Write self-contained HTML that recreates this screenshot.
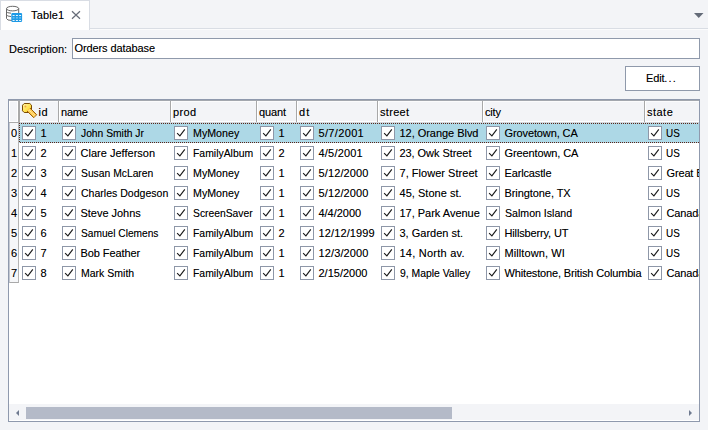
<!DOCTYPE html><html><head><meta charset="utf-8"><style>
*{box-sizing:border-box;margin:0;padding:0}
html,body{width:708px;height:430px;overflow:hidden;background:#f3f4f7;font-family:"Liberation Sans",sans-serif;font-size:11px;color:#000;letter-spacing:-0.15px}
.a{position:absolute}
.t{position:absolute;white-space:nowrap;line-height:13px;text-shadow:0 0 0.4px rgba(0,0,0,0.35)}
.cb{position:absolute;width:14px;height:14px;border:1px solid #8e97a8;background:#fff}
.cb svg{position:absolute;left:0;top:0}
.hs{position:absolute;top:101px;width:1px;height:21px;background:#a8a8a8}
.hw{position:absolute;top:101px;width:1px;height:21px;background:#fff}
</style></head><body>
<div class="a" style="left:0;top:28px;width:708px;height:1px;background:#d9dde4"></div>
<div class="a" style="left:0;top:29px;width:708px;height:1px;background:#fbfbfc"></div>
<div class="a" style="left:0;top:0;width:90px;height:30px;background:#fff;border:1px solid #d9dde4;border-bottom:none"></div>
<svg class="a" style="left:0;top:0" width="24" height="24" viewBox="0 0 24 24">
 <path d="M6.5 8.5 V18.5 Q6.5 20.5 12.5 20.5 Q14 20.5 15 20.3" fill="none" stroke="#686868" stroke-width="1"/>
 <ellipse cx="12.6" cy="8.6" rx="6.1" ry="2.3" fill="#fff" stroke="#686868" stroke-width="1"/>
 <path d="M18.7 8.6 V13" fill="none" stroke="#686868" stroke-width="1"/>
 <path d="M6.5 11.5 Q6.5 13 11 13.2 M6.5 14.8 Q6.5 16.3 11 16.5" fill="none" stroke="#686868" stroke-width="1"/>
 <rect x="11.3" y="12.9" width="10.8" height="9.1" rx="1.2" fill="#1d9ae6"/>
 <g fill="#e8f5fd"><rect x="12.6" y="15" width="2" height="1"/><rect x="15.9" y="15" width="2" height="1"/><rect x="19.1" y="15" width="2" height="1"/>
 <rect x="12.6" y="17.4" width="2" height="1" opacity=".6"/><rect x="15.9" y="17.4" width="2" height="1" opacity=".6"/><rect x="19.1" y="17.4" width="2" height="1" opacity=".6"/>
 <rect x="12.6" y="20" width="2" height="1"/><rect x="15.9" y="20" width="2" height="1"/><rect x="19.1" y="20" width="2" height="1"/></g>
</svg>
<div class="t" style="left:31px;top:9px;letter-spacing:0.14px">Table1</div>
<svg class="a" style="left:70px;top:9px" width="12" height="12" viewBox="0 0 12 12"><path d="M2 2.3L10 9.7M10 2.3L2 9.7" stroke="#666c78" stroke-width="1.2"/></svg>
<svg class="a" style="left:693px;top:12px" width="12" height="8" viewBox="0 0 12 8"><path d="M1 1 H10.5 L5.75 6 Z" fill="#646b78"/></svg>
<div class="t" style="left:9px;top:43px;letter-spacing:0">Description:</div>
<div class="a" style="left:72px;top:38px;width:628px;height:21px;background:#fff;border:1px solid #8f99ab"></div>
<div class="t" style="left:74.5px;top:42px;letter-spacing:-0.1px">Orders database</div>
<div class="a" style="left:625px;top:66px;width:75px;height:25px;background:#fff;border:1px solid #8f99ab"></div>
<div class="t" style="left:646px;top:72px">Edit<span style="letter-spacing:1.1px">...</span></div>
<div class="a" style="left:8px;top:99px;width:692px;height:323px;background:#fff;border:1px solid #8f99ad"></div>
<div class="a" style="left:9px;top:100px;width:690px;height:1px;background:#a3a7ae"></div>
<div class="a" style="left:10px;top:101px;width:689px;height:21px;background:#f3f4f7;border-top:1px solid #fbfbfc;border-bottom:1px solid #fdfdfe"></div>
<div class="a" style="left:19px;top:122px;width:680px;height:1px;background:#d4d6da"></div>
<div class="a" style="left:0;top:0;width:699px;height:404px;overflow:hidden">
<div class="a" style="left:17px;top:101px;width:1px;height:21px;background:#fff"></div>
<div class="a" style="left:18px;top:101px;width:2px;height:22px;background:#a9a9a9"></div>
<div class="a" style="left:9px;top:122px;width:10px;height:1px;background:#a9a9a9"></div>
<div class="hs" style="left:58px"></div><div class="hw" style="left:59px"></div>
<div class="t" style="left:61px;top:106px;letter-spacing:-0.2px;">name</div>
<div class="hs" style="left:170px"></div><div class="hw" style="left:171px"></div>
<div class="t" style="left:173px;top:106px;letter-spacing:0.4px;">prod</div>
<div class="hs" style="left:256px"></div><div class="hw" style="left:257px"></div>
<div class="t" style="left:259px;top:106px;letter-spacing:-0.1px;">quant</div>
<div class="hs" style="left:296px"></div><div class="hw" style="left:297px"></div>
<div class="t" style="left:299px;top:106px;letter-spacing:1.1px;">dt</div>
<div class="hs" style="left:377px"></div><div class="hw" style="left:378px"></div>
<div class="t" style="left:380px;top:106px;letter-spacing:0.32px;">street</div>
<div class="hs" style="left:482px"></div><div class="hw" style="left:483px"></div>
<div class="t" style="left:485px;top:106px;letter-spacing:-0.2px;">city</div>
<div class="hs" style="left:644px"></div><div class="hw" style="left:645px"></div>
<div class="t" style="left:647px;top:106px;letter-spacing:0.475px;">state</div>
<div class="hs" style="left:644px"></div>
<div class="t" style="left:38.5px;top:106px;letter-spacing:0.5px">id</div>
<svg class="a" style="left:19px;top:100px" width="20" height="20" viewBox="0 0 20 20">
 <defs><linearGradient id="kg" x1="0" y1="0" x2="1" y2="1"><stop offset="0" stop-color="#fff6a8"/><stop offset="0.6" stop-color="#ffe04a"/><stop offset="1" stop-color="#f2b820"/></linearGradient></defs>
 <path d="M5.2 3.5 H10.8 L12.5 5.2 V10.8 L10.8 12.5 H5.2 L3.5 10.8 V5.2 Z" fill="url(#kg)" stroke="#7a4a02" stroke-width="1"/>
 <path d="M10.98 8.02 L17.68 14.72 L14.72 17.68 L8.02 10.98 Z" fill="#ffc23e"/>
 <path d="M8.02 10.98 L14.72 17.68 L17.68 14.72 L10.98 8.02" fill="none" stroke="#9a5c04" stroke-width="1"/>
 <path d="M10 10 L16.2 16.2" stroke="#fff0b0" stroke-width="2.4" stroke-dasharray="0.8 0.9"/>
 <circle cx="6.4" cy="6.4" r="1" fill="#f2a448"/>
</svg>
<div class="a" style="left:9px;top:123px;width:10px;height:160px;background:#f6f7f9;border-left:1px solid #c3c8d2;border-right:1px solid #b4b4b4;border-bottom:1px solid #a9a9a9"></div>
<div class="a" style="left:19px;top:123px;width:680px;height:20px;background:#add8e6"></div>
<div class="a" style="left:19px;top:123px;width:680px;height:1px;background:repeating-linear-gradient(90deg,#5e2417 0 1px,transparent 1px 2px)"></div>
<div class="a" style="left:20px;top:142px;width:679px;height:1px;background:repeating-linear-gradient(90deg,#5e2417 0 1px,transparent 1px 2px)"></div>
<div class="a" style="left:19px;top:123px;width:1px;height:20px;background:repeating-linear-gradient(180deg,#5e2417 0 1px,transparent 1px 2px)"></div>
<div class="t" style="left:11px;top:127px">0</div>
<div class="cb" style="left:22px;top:126px"><svg width="12" height="12" viewBox="0 0 12 12"><path d="M2.1 6.2 L4.9 8.9 L9.8 2.3" fill="none" stroke="#1a1a1a" stroke-width="1.1"/></svg></div>
<div class="t" style="left:40.5px;top:127px;">1</div>
<div class="cb" style="left:62px;top:126px"><svg width="12" height="12" viewBox="0 0 12 12"><path d="M2.1 6.2 L4.9 8.9 L9.8 2.3" fill="none" stroke="#1a1a1a" stroke-width="1.1"/></svg></div>
<div class="t" style="left:80.5px;top:127px;letter-spacing:0;transform:scaleX(0.9358);transform-origin:0 0;">John Smith Jr</div>
<div class="cb" style="left:174px;top:126px"><svg width="12" height="12" viewBox="0 0 12 12"><path d="M2.1 6.2 L4.9 8.9 L9.8 2.3" fill="none" stroke="#1a1a1a" stroke-width="1.1"/></svg></div>
<div class="t" style="left:192.5px;top:127px;letter-spacing:0;transform:scaleX(0.9702);transform-origin:0 0;">MyMoney</div>
<div class="cb" style="left:260px;top:126px"><svg width="12" height="12" viewBox="0 0 12 12"><path d="M2.1 6.2 L4.9 8.9 L9.8 2.3" fill="none" stroke="#1a1a1a" stroke-width="1.1"/></svg></div>
<div class="t" style="left:278.5px;top:127px;">1</div>
<div class="cb" style="left:300px;top:126px"><svg width="12" height="12" viewBox="0 0 12 12"><path d="M2.1 6.2 L4.9 8.9 L9.8 2.3" fill="none" stroke="#1a1a1a" stroke-width="1.1"/></svg></div>
<div class="t" style="left:318.5px;top:127px;letter-spacing:0.343px;">5/7/2001</div>
<div class="cb" style="left:381px;top:126px"><svg width="12" height="12" viewBox="0 0 12 12"><path d="M2.1 6.2 L4.9 8.9 L9.8 2.3" fill="none" stroke="#1a1a1a" stroke-width="1.1"/></svg></div>
<div class="t" style="left:399.5px;top:127px;letter-spacing:-0.036px;">12, Orange Blvd</div>
<div class="cb" style="left:486px;top:126px"><svg width="12" height="12" viewBox="0 0 12 12"><path d="M2.1 6.2 L4.9 8.9 L9.8 2.3" fill="none" stroke="#1a1a1a" stroke-width="1.1"/></svg></div>
<div class="t" style="left:504.5px;top:127px;letter-spacing:-0.108px;">Grovetown, CA</div>
<div class="cb" style="left:648px;top:126px"><svg width="12" height="12" viewBox="0 0 12 12"><path d="M2.1 6.2 L4.9 8.9 L9.8 2.3" fill="none" stroke="#1a1a1a" stroke-width="1.1"/></svg></div>
<div class="t" style="left:665.8px;top:127px;letter-spacing:0;transform:scaleX(0.9);transform-origin:0 0;">US</div>
<div class="t" style="left:11px;top:147px">1</div>
<div class="cb" style="left:22px;top:146px"><svg width="12" height="12" viewBox="0 0 12 12"><path d="M2.1 6.2 L4.9 8.9 L9.8 2.3" fill="none" stroke="#1a1a1a" stroke-width="1.1"/></svg></div>
<div class="t" style="left:40.5px;top:147px;">2</div>
<div class="cb" style="left:62px;top:146px"><svg width="12" height="12" viewBox="0 0 12 12"><path d="M2.1 6.2 L4.9 8.9 L9.8 2.3" fill="none" stroke="#1a1a1a" stroke-width="1.1"/></svg></div>
<div class="t" style="left:80.5px;top:147px;letter-spacing:0.014px;">Clare Jefferson</div>
<div class="cb" style="left:174px;top:146px"><svg width="12" height="12" viewBox="0 0 12 12"><path d="M2.1 6.2 L4.9 8.9 L9.8 2.3" fill="none" stroke="#1a1a1a" stroke-width="1.1"/></svg></div>
<div class="t" style="left:192.5px;top:147px;letter-spacing:0;transform:scaleX(0.9468);transform-origin:0 0;">FamilyAlbum</div>
<div class="cb" style="left:260px;top:146px"><svg width="12" height="12" viewBox="0 0 12 12"><path d="M2.1 6.2 L4.9 8.9 L9.8 2.3" fill="none" stroke="#1a1a1a" stroke-width="1.1"/></svg></div>
<div class="t" style="left:278.5px;top:147px;">2</div>
<div class="cb" style="left:300px;top:146px"><svg width="12" height="12" viewBox="0 0 12 12"><path d="M2.1 6.2 L4.9 8.9 L9.8 2.3" fill="none" stroke="#1a1a1a" stroke-width="1.1"/></svg></div>
<div class="t" style="left:318.5px;top:147px;letter-spacing:0.2px;">4/5/2001</div>
<div class="cb" style="left:381px;top:146px"><svg width="12" height="12" viewBox="0 0 12 12"><path d="M2.1 6.2 L4.9 8.9 L9.8 2.3" fill="none" stroke="#1a1a1a" stroke-width="1.1"/></svg></div>
<div class="t" style="left:399.5px;top:147px;letter-spacing:-0.062px;">23, Owk Street</div>
<div class="cb" style="left:486px;top:146px"><svg width="12" height="12" viewBox="0 0 12 12"><path d="M2.1 6.2 L4.9 8.9 L9.8 2.3" fill="none" stroke="#1a1a1a" stroke-width="1.1"/></svg></div>
<div class="t" style="left:504.5px;top:147px;letter-spacing:-0.108px;">Greentown, CA</div>
<div class="cb" style="left:648px;top:146px"><svg width="12" height="12" viewBox="0 0 12 12"><path d="M2.1 6.2 L4.9 8.9 L9.8 2.3" fill="none" stroke="#1a1a1a" stroke-width="1.1"/></svg></div>
<div class="t" style="left:665.8px;top:147px;letter-spacing:0;transform:scaleX(0.9);transform-origin:0 0;">US</div>
<div class="t" style="left:11px;top:167px">2</div>
<div class="cb" style="left:22px;top:166px"><svg width="12" height="12" viewBox="0 0 12 12"><path d="M2.1 6.2 L4.9 8.9 L9.8 2.3" fill="none" stroke="#1a1a1a" stroke-width="1.1"/></svg></div>
<div class="t" style="left:40.5px;top:167px;">3</div>
<div class="cb" style="left:62px;top:166px"><svg width="12" height="12" viewBox="0 0 12 12"><path d="M2.1 6.2 L4.9 8.9 L9.8 2.3" fill="none" stroke="#1a1a1a" stroke-width="1.1"/></svg></div>
<div class="t" style="left:80.5px;top:167px;letter-spacing:0;transform:scaleX(0.9382);transform-origin:0 0;">Susan McLaren</div>
<div class="cb" style="left:174px;top:166px"><svg width="12" height="12" viewBox="0 0 12 12"><path d="M2.1 6.2 L4.9 8.9 L9.8 2.3" fill="none" stroke="#1a1a1a" stroke-width="1.1"/></svg></div>
<div class="t" style="left:192.5px;top:167px;letter-spacing:0;transform:scaleX(0.9702);transform-origin:0 0;">MyMoney</div>
<div class="cb" style="left:260px;top:166px"><svg width="12" height="12" viewBox="0 0 12 12"><path d="M2.1 6.2 L4.9 8.9 L9.8 2.3" fill="none" stroke="#1a1a1a" stroke-width="1.1"/></svg></div>
<div class="t" style="left:278.5px;top:167px;">1</div>
<div class="cb" style="left:300px;top:166px"><svg width="12" height="12" viewBox="0 0 12 12"><path d="M2.1 6.2 L4.9 8.9 L9.8 2.3" fill="none" stroke="#1a1a1a" stroke-width="1.1"/></svg></div>
<div class="t" style="left:318.5px;top:167px;letter-spacing:0.125px;">5/12/2000</div>
<div class="cb" style="left:381px;top:166px"><svg width="12" height="12" viewBox="0 0 12 12"><path d="M2.1 6.2 L4.9 8.9 L9.8 2.3" fill="none" stroke="#1a1a1a" stroke-width="1.1"/></svg></div>
<div class="t" style="left:399.5px;top:167px;letter-spacing:0.033px;">7, Flower Street</div>
<div class="cb" style="left:486px;top:166px"><svg width="12" height="12" viewBox="0 0 12 12"><path d="M2.1 6.2 L4.9 8.9 L9.8 2.3" fill="none" stroke="#1a1a1a" stroke-width="1.1"/></svg></div>
<div class="t" style="left:504.5px;top:167px;letter-spacing:-0.144px;">Earlcastle</div>
<div class="cb" style="left:648px;top:166px"><svg width="12" height="12" viewBox="0 0 12 12"><path d="M2.1 6.2 L4.9 8.9 L9.8 2.3" fill="none" stroke="#1a1a1a" stroke-width="1.1"/></svg></div>
<div class="t" style="left:666.5px;top:167px;">Great Britain</div>
<div class="t" style="left:11px;top:187px">3</div>
<div class="cb" style="left:22px;top:186px"><svg width="12" height="12" viewBox="0 0 12 12"><path d="M2.1 6.2 L4.9 8.9 L9.8 2.3" fill="none" stroke="#1a1a1a" stroke-width="1.1"/></svg></div>
<div class="t" style="left:40.5px;top:187px;">4</div>
<div class="cb" style="left:62px;top:186px"><svg width="12" height="12" viewBox="0 0 12 12"><path d="M2.1 6.2 L4.9 8.9 L9.8 2.3" fill="none" stroke="#1a1a1a" stroke-width="1.1"/></svg></div>
<div class="t" style="left:80.5px;top:187px;letter-spacing:0;transform:scaleX(0.9578);transform-origin:0 0;">Charles Dodgeson</div>
<div class="cb" style="left:174px;top:186px"><svg width="12" height="12" viewBox="0 0 12 12"><path d="M2.1 6.2 L4.9 8.9 L9.8 2.3" fill="none" stroke="#1a1a1a" stroke-width="1.1"/></svg></div>
<div class="t" style="left:192.5px;top:187px;letter-spacing:0;transform:scaleX(0.9702);transform-origin:0 0;">MyMoney</div>
<div class="cb" style="left:260px;top:186px"><svg width="12" height="12" viewBox="0 0 12 12"><path d="M2.1 6.2 L4.9 8.9 L9.8 2.3" fill="none" stroke="#1a1a1a" stroke-width="1.1"/></svg></div>
<div class="t" style="left:278.5px;top:187px;">1</div>
<div class="cb" style="left:300px;top:186px"><svg width="12" height="12" viewBox="0 0 12 12"><path d="M2.1 6.2 L4.9 8.9 L9.8 2.3" fill="none" stroke="#1a1a1a" stroke-width="1.1"/></svg></div>
<div class="t" style="left:318.5px;top:187px;letter-spacing:0.125px;">5/12/2000</div>
<div class="cb" style="left:381px;top:186px"><svg width="12" height="12" viewBox="0 0 12 12"><path d="M2.1 6.2 L4.9 8.9 L9.8 2.3" fill="none" stroke="#1a1a1a" stroke-width="1.1"/></svg></div>
<div class="t" style="left:399.5px;top:187px;letter-spacing:0.033px;">45, Stone st.</div>
<div class="cb" style="left:486px;top:186px"><svg width="12" height="12" viewBox="0 0 12 12"><path d="M2.1 6.2 L4.9 8.9 L9.8 2.3" fill="none" stroke="#1a1a1a" stroke-width="1.1"/></svg></div>
<div class="t" style="left:504.5px;top:187px;letter-spacing:-0.075px;">Bringtone, TX</div>
<div class="cb" style="left:648px;top:186px"><svg width="12" height="12" viewBox="0 0 12 12"><path d="M2.1 6.2 L4.9 8.9 L9.8 2.3" fill="none" stroke="#1a1a1a" stroke-width="1.1"/></svg></div>
<div class="t" style="left:665.8px;top:187px;letter-spacing:0;transform:scaleX(0.9);transform-origin:0 0;">US</div>
<div class="t" style="left:11px;top:207px">4</div>
<div class="cb" style="left:22px;top:206px"><svg width="12" height="12" viewBox="0 0 12 12"><path d="M2.1 6.2 L4.9 8.9 L9.8 2.3" fill="none" stroke="#1a1a1a" stroke-width="1.1"/></svg></div>
<div class="t" style="left:40.5px;top:207px;">5</div>
<div class="cb" style="left:62px;top:206px"><svg width="12" height="12" viewBox="0 0 12 12"><path d="M2.1 6.2 L4.9 8.9 L9.8 2.3" fill="none" stroke="#1a1a1a" stroke-width="1.1"/></svg></div>
<div class="t" style="left:80.5px;top:207px;letter-spacing:-0.03px;">Steve Johns</div>
<div class="cb" style="left:174px;top:206px"><svg width="12" height="12" viewBox="0 0 12 12"><path d="M2.1 6.2 L4.9 8.9 L9.8 2.3" fill="none" stroke="#1a1a1a" stroke-width="1.1"/></svg></div>
<div class="t" style="left:192.5px;top:207px;letter-spacing:0;transform:scaleX(0.9381);transform-origin:0 0;">ScreenSaver</div>
<div class="cb" style="left:260px;top:206px"><svg width="12" height="12" viewBox="0 0 12 12"><path d="M2.1 6.2 L4.9 8.9 L9.8 2.3" fill="none" stroke="#1a1a1a" stroke-width="1.1"/></svg></div>
<div class="t" style="left:278.5px;top:207px;">1</div>
<div class="cb" style="left:300px;top:206px"><svg width="12" height="12" viewBox="0 0 12 12"><path d="M2.1 6.2 L4.9 8.9 L9.8 2.3" fill="none" stroke="#1a1a1a" stroke-width="1.1"/></svg></div>
<div class="t" style="left:318.5px;top:207px;letter-spacing:-0.029px;">4/4/2000</div>
<div class="cb" style="left:381px;top:206px"><svg width="12" height="12" viewBox="0 0 12 12"><path d="M2.1 6.2 L4.9 8.9 L9.8 2.3" fill="none" stroke="#1a1a1a" stroke-width="1.1"/></svg></div>
<div class="t" style="left:399.5px;top:207px;letter-spacing:-0.014px;">17, Park Avenue</div>
<div class="cb" style="left:486px;top:206px"><svg width="12" height="12" viewBox="0 0 12 12"><path d="M2.1 6.2 L4.9 8.9 L9.8 2.3" fill="none" stroke="#1a1a1a" stroke-width="1.1"/></svg></div>
<div class="t" style="left:504.5px;top:207px;letter-spacing:0;transform:scaleX(0.9632);transform-origin:0 0;">Salmon Island</div>
<div class="cb" style="left:648px;top:206px"><svg width="12" height="12" viewBox="0 0 12 12"><path d="M2.1 6.2 L4.9 8.9 L9.8 2.3" fill="none" stroke="#1a1a1a" stroke-width="1.1"/></svg></div>
<div class="t" style="left:666.5px;top:207px;">Canada</div>
<div class="t" style="left:11px;top:227px">5</div>
<div class="cb" style="left:22px;top:226px"><svg width="12" height="12" viewBox="0 0 12 12"><path d="M2.1 6.2 L4.9 8.9 L9.8 2.3" fill="none" stroke="#1a1a1a" stroke-width="1.1"/></svg></div>
<div class="t" style="left:40.5px;top:227px;">6</div>
<div class="cb" style="left:62px;top:226px"><svg width="12" height="12" viewBox="0 0 12 12"><path d="M2.1 6.2 L4.9 8.9 L9.8 2.3" fill="none" stroke="#1a1a1a" stroke-width="1.1"/></svg></div>
<div class="t" style="left:80.5px;top:227px;letter-spacing:0;transform:scaleX(0.9241);transform-origin:0 0;">Samuel Clemens</div>
<div class="cb" style="left:174px;top:226px"><svg width="12" height="12" viewBox="0 0 12 12"><path d="M2.1 6.2 L4.9 8.9 L9.8 2.3" fill="none" stroke="#1a1a1a" stroke-width="1.1"/></svg></div>
<div class="t" style="left:192.5px;top:227px;letter-spacing:0;transform:scaleX(0.9468);transform-origin:0 0;">FamilyAlbum</div>
<div class="cb" style="left:260px;top:226px"><svg width="12" height="12" viewBox="0 0 12 12"><path d="M2.1 6.2 L4.9 8.9 L9.8 2.3" fill="none" stroke="#1a1a1a" stroke-width="1.1"/></svg></div>
<div class="t" style="left:278.5px;top:227px;">2</div>
<div class="cb" style="left:300px;top:226px"><svg width="12" height="12" viewBox="0 0 12 12"><path d="M2.1 6.2 L4.9 8.9 L9.8 2.3" fill="none" stroke="#1a1a1a" stroke-width="1.1"/></svg></div>
<div class="t" style="left:318.5px;top:227px;letter-spacing:0.122px;">12/12/1999</div>
<div class="cb" style="left:381px;top:226px"><svg width="12" height="12" viewBox="0 0 12 12"><path d="M2.1 6.2 L4.9 8.9 L9.8 2.3" fill="none" stroke="#1a1a1a" stroke-width="1.1"/></svg></div>
<div class="t" style="left:399.5px;top:227px;letter-spacing:0.0px;">3, Garden st.</div>
<div class="cb" style="left:486px;top:226px"><svg width="12" height="12" viewBox="0 0 12 12"><path d="M2.1 6.2 L4.9 8.9 L9.8 2.3" fill="none" stroke="#1a1a1a" stroke-width="1.1"/></svg></div>
<div class="t" style="left:504.5px;top:227px;letter-spacing:-0.146px;">Hillsberry, UT</div>
<div class="cb" style="left:648px;top:226px"><svg width="12" height="12" viewBox="0 0 12 12"><path d="M2.1 6.2 L4.9 8.9 L9.8 2.3" fill="none" stroke="#1a1a1a" stroke-width="1.1"/></svg></div>
<div class="t" style="left:665.8px;top:227px;letter-spacing:0;transform:scaleX(0.9);transform-origin:0 0;">US</div>
<div class="t" style="left:11px;top:247px">6</div>
<div class="cb" style="left:22px;top:246px"><svg width="12" height="12" viewBox="0 0 12 12"><path d="M2.1 6.2 L4.9 8.9 L9.8 2.3" fill="none" stroke="#1a1a1a" stroke-width="1.1"/></svg></div>
<div class="t" style="left:40.5px;top:247px;">7</div>
<div class="cb" style="left:62px;top:246px"><svg width="12" height="12" viewBox="0 0 12 12"><path d="M2.1 6.2 L4.9 8.9 L9.8 2.3" fill="none" stroke="#1a1a1a" stroke-width="1.1"/></svg></div>
<div class="t" style="left:80.5px;top:247px;letter-spacing:-0.09px;">Bob Feather</div>
<div class="cb" style="left:174px;top:246px"><svg width="12" height="12" viewBox="0 0 12 12"><path d="M2.1 6.2 L4.9 8.9 L9.8 2.3" fill="none" stroke="#1a1a1a" stroke-width="1.1"/></svg></div>
<div class="t" style="left:192.5px;top:247px;letter-spacing:0;transform:scaleX(0.9468);transform-origin:0 0;">FamilyAlbum</div>
<div class="cb" style="left:260px;top:246px"><svg width="12" height="12" viewBox="0 0 12 12"><path d="M2.1 6.2 L4.9 8.9 L9.8 2.3" fill="none" stroke="#1a1a1a" stroke-width="1.1"/></svg></div>
<div class="t" style="left:278.5px;top:247px;">1</div>
<div class="cb" style="left:300px;top:246px"><svg width="12" height="12" viewBox="0 0 12 12"><path d="M2.1 6.2 L4.9 8.9 L9.8 2.3" fill="none" stroke="#1a1a1a" stroke-width="1.1"/></svg></div>
<div class="t" style="left:318.5px;top:247px;letter-spacing:0.125px;">12/3/2000</div>
<div class="cb" style="left:381px;top:246px"><svg width="12" height="12" viewBox="0 0 12 12"><path d="M2.1 6.2 L4.9 8.9 L9.8 2.3" fill="none" stroke="#1a1a1a" stroke-width="1.1"/></svg></div>
<div class="t" style="left:399.5px;top:247px;letter-spacing:0.242px;">14, North av.</div>
<div class="cb" style="left:486px;top:246px"><svg width="12" height="12" viewBox="0 0 12 12"><path d="M2.1 6.2 L4.9 8.9 L9.8 2.3" fill="none" stroke="#1a1a1a" stroke-width="1.1"/></svg></div>
<div class="t" style="left:504.5px;top:247px;letter-spacing:0.091px;">Milltown, WI</div>
<div class="cb" style="left:648px;top:246px"><svg width="12" height="12" viewBox="0 0 12 12"><path d="M2.1 6.2 L4.9 8.9 L9.8 2.3" fill="none" stroke="#1a1a1a" stroke-width="1.1"/></svg></div>
<div class="t" style="left:665.8px;top:247px;letter-spacing:0;transform:scaleX(0.9);transform-origin:0 0;">US</div>
<div class="t" style="left:11px;top:267px">7</div>
<div class="cb" style="left:22px;top:266px"><svg width="12" height="12" viewBox="0 0 12 12"><path d="M2.1 6.2 L4.9 8.9 L9.8 2.3" fill="none" stroke="#1a1a1a" stroke-width="1.1"/></svg></div>
<div class="t" style="left:40.5px;top:267px;">8</div>
<div class="cb" style="left:62px;top:266px"><svg width="12" height="12" viewBox="0 0 12 12"><path d="M2.1 6.2 L4.9 8.9 L9.8 2.3" fill="none" stroke="#1a1a1a" stroke-width="1.1"/></svg></div>
<div class="t" style="left:80.5px;top:267px;letter-spacing:0;transform:scaleX(0.9556);transform-origin:0 0;">Mark Smith</div>
<div class="cb" style="left:174px;top:266px"><svg width="12" height="12" viewBox="0 0 12 12"><path d="M2.1 6.2 L4.9 8.9 L9.8 2.3" fill="none" stroke="#1a1a1a" stroke-width="1.1"/></svg></div>
<div class="t" style="left:192.5px;top:267px;letter-spacing:0;transform:scaleX(0.9468);transform-origin:0 0;">FamilyAlbum</div>
<div class="cb" style="left:260px;top:266px"><svg width="12" height="12" viewBox="0 0 12 12"><path d="M2.1 6.2 L4.9 8.9 L9.8 2.3" fill="none" stroke="#1a1a1a" stroke-width="1.1"/></svg></div>
<div class="t" style="left:278.5px;top:267px;">1</div>
<div class="cb" style="left:300px;top:266px"><svg width="12" height="12" viewBox="0 0 12 12"><path d="M2.1 6.2 L4.9 8.9 L9.8 2.3" fill="none" stroke="#1a1a1a" stroke-width="1.1"/></svg></div>
<div class="t" style="left:318.5px;top:267px;letter-spacing:0.0px;">2/15/2000</div>
<div class="cb" style="left:381px;top:266px"><svg width="12" height="12" viewBox="0 0 12 12"><path d="M2.1 6.2 L4.9 8.9 L9.8 2.3" fill="none" stroke="#1a1a1a" stroke-width="1.1"/></svg></div>
<div class="t" style="left:399.5px;top:267px;letter-spacing:0;transform:scaleX(0.944);transform-origin:0 0;">9, Maple Valley</div>
<div class="cb" style="left:486px;top:266px"><svg width="12" height="12" viewBox="0 0 12 12"><path d="M2.1 6.2 L4.9 8.9 L9.8 2.3" fill="none" stroke="#1a1a1a" stroke-width="1.1"/></svg></div>
<div class="t" style="left:504.5px;top:267px;letter-spacing:-0.156px;">Whitestone, British Columbia</div>
<div class="cb" style="left:648px;top:266px"><svg width="12" height="12" viewBox="0 0 12 12"><path d="M2.1 6.2 L4.9 8.9 L9.8 2.3" fill="none" stroke="#1a1a1a" stroke-width="1.1"/></svg></div>
<div class="t" style="left:666.5px;top:267px;">Canada</div>
</div>
<div class="a" style="left:9px;top:404px;width:690px;height:16px;background:#f3f4f7"></div>
<div class="a" style="left:26px;top:407px;width:426px;height:12px;background:#b4bac8"></div>
<div class="a" style="left:16px;top:410px;width:0;height:0;border-top:3.5px solid transparent;border-bottom:3.5px solid transparent;border-right:3.5px solid #6f7a90"></div>
<div class="a" style="left:689px;top:410px;width:0;height:0;border-top:3.5px solid transparent;border-bottom:3.5px solid transparent;border-left:3.5px solid #6f7a90"></div>
</body></html>
